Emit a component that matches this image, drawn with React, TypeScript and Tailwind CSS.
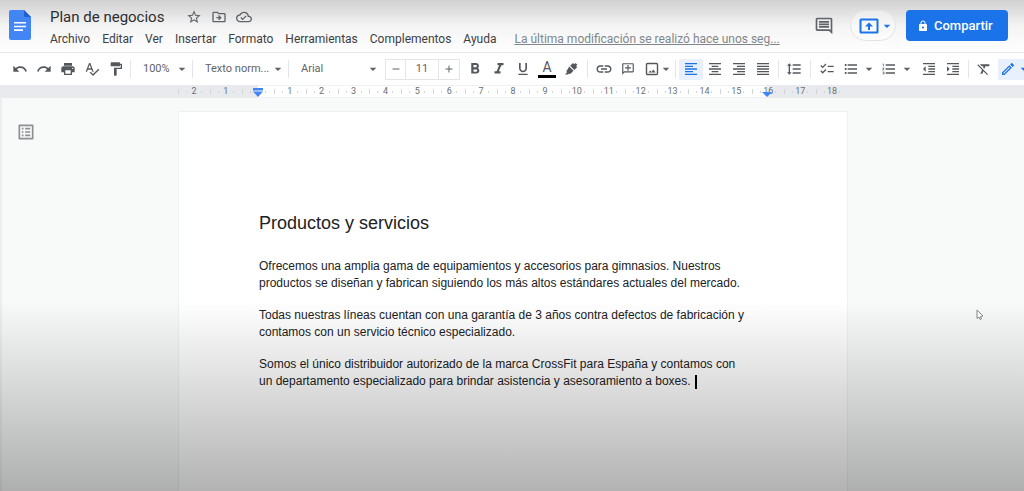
import type { ReactNode } from 'react';
import clsx from 'clsx';
import {
  MdAdd,
  MdArrowDropDown,
  MdChecklist,
  MdFormatAlignCenter,
  MdFormatAlignJustify,
  MdFormatAlignLeft,
  MdFormatAlignRight,
  MdFormatBold,
  MdFormatClear,
  MdFormatIndentDecrease,
  MdFormatIndentIncrease,
  MdFormatItalic,
  MdFormatLineSpacing,
  MdFormatListBulleted,
  MdFormatListNumbered,
  MdFormatPaint,
  MdFormatUnderlined,
  MdLink,
  MdLock,
  MdOutlineAddComment,
  MdOutlineCloudDone,
  MdOutlineDriveFileMove,
  MdOutlineEdit,
  MdOutlineInsertComment,
  MdOutlineListAlt,
  MdPrint,
  MdRedo,
  MdRemove,
  MdSpellcheck,
  MdStarBorder,
  MdUndo,
} from 'react-icons/md';

const menus = ['Archivo', 'Editar', 'Ver', 'Insertar', 'Formato', 'Herramientas', 'Complementos', 'Ayuda'];

const rulerMarks = [2, 1, 0, 1, 2, 3, 4, 5, 6, 7, 8, 9, 10, 11, 12, 13, 14, 15, 16, 17, 18];

const paragraphs = [
  [
    'Ofrecemos una amplia gama de equipamientos y accesorios para gimnasios. Nuestros',
    'productos se diseñan y fabrican siguiendo los más altos estándares actuales del mercado.',
  ],
  [
    'Todas nuestras líneas cuentan con una garantía de 3 años contra defectos de fabricación y',
    'contamos con un servicio técnico especializado.',
  ],
  [
    'Somos el único distribuidor autorizado de la marca CrossFit para España y contamos con',
    'un departamento especializado para brindar asistencia y asesoramiento a boxes.',
  ],
];

function DocsLogo() {
  return (
    <svg viewBox="0 0 22 30" className="h-[30px] w-[22px] shrink-0">
      <path d="M2 0h13l7 7v21a2 2 0 0 1-2 2H2a2 2 0 0 1-2-2V2a2 2 0 0 1 2-2z" fill="#4285f4" />
      <path d="M15 0l7 7h-5.500a1.500 1.500 0 0 1-1.500-1.500z" fill="#1f5fd0" />
      <path d="M5 12h12v1.600H5zM5 15.700h12v1.600H5zM5 19.300h9v1.600H5z" fill="#fff" />
    </svg>
  );
}

function PresentIcon() {
  return (
    <svg viewBox="0 0 20 16" className="h-4 w-5 shrink-0" fill="none" stroke="#1a73e8" strokeWidth="2">
      <rect x="1.500" y="1.500" width="17" height="13" rx="0.500" />
      <path d="M10 12V6" />
      <path d="M6 8.600L10 4.400l4 4.200z" fill="#1a73e8" stroke="none" />
    </svg>
  );
}

function HighlighterIcon() {
  return (
    <svg viewBox="0 0 16 16" className="size-4" fill="currentColor">
      <path d="M6.300 5.600l4.200 4.200-2.700 2.700c-.5.500-1.300.5-1.800.1l-.9.900H2l2-2.200c-.6-.6-.6-1.500 0-2z" />
      <path d="M7.200 4.800L10 2l1.300 1.200 1.200-1.200 1.900 1.800-1.300 1.300L14.200 6.300l-2.900 2.800z" />
    </svg>
  );
}

function ImageIcon() {
  return (
    <svg viewBox="0 0 14 14" className="size-3.5" fill="none" stroke="currentColor" strokeWidth="1.400">
      <rect x="1.500" y="1.500" width="11" height="11" rx="1" />
      <path d="M3.500 10.600l1.700-2.100 1.300 1.500 1.800-2.500 2.300 3.100z" fill="currentColor" stroke="none" />
    </svg>
  );
}

function ToolButton({ label, active, children }: { label: string; active?: boolean; children: ReactNode }) {
  return (
    <button
      aria-label={label}
      title={label}
      className={clsx(
        'flex h-[21px] w-6 shrink-0 items-center justify-center rounded-xs text-base',
        active ? 'bg-[#e8f0fe] text-[#1a73e8]' : 'text-[#54585d]'
      )}
    >
      {children}
    </button>
  );
}

function DropButton({ label, className }: { label: string; className?: string }) {
  return (
    <button
      aria-label={label}
      title={label}
      className={clsx('flex h-5 w-3 shrink-0 items-center justify-center text-[#5f6368]', className)}
    >
      <MdArrowDropDown className="size-4 shrink-0" />
    </button>
  );
}

function Divider({ className = 'mx-[3px]' }: { className?: string }) {
  return <div className={clsx('h-[18px] w-px shrink-0 bg-[#e3e5e8]', className)} />;
}

function ToolSelect({ label, value, className }: { label: string; value: string; className: string }) {
  return (
    <div className={clsx('relative flex shrink-0 items-center', className)}>
      <select
        aria-label={label}
        defaultValue={value}
        className="h-5 w-full appearance-none bg-transparent pl-2.5 text-[11px] text-[#5f6368] outline-none"
      >
        <option>{value}</option>
      </select>
      <MdArrowDropDown className="pointer-events-none absolute right-0 size-4 text-[#5f6368]" />
    </div>
  );
}

function Header() {
  return (
    <header className="flex h-[53px] items-start border-b border-[#e4e6e8] bg-linear-to-b from-[#d0d0d0] via-[#f4f4f4] via-50% to-white pl-[9px] pt-2.5 pr-4">
      <DocsLogo />
      <div className="ml-[19px] min-w-0 flex-1 -mt-1">
        <div className="flex h-[22px] items-center">
          <h1 className="text-[15px] text-[#2c2e31]">Plan de negocios</h1>
          <div className="ml-[22px] flex items-center gap-[9px] text-[#5f6368]">
            <button aria-label="Destacar"><MdStarBorder className="size-4" /></button>
            <button aria-label="Mover"><MdOutlineDriveFileMove className="size-4" /></button>
            <button aria-label="Guardado en Drive"><MdOutlineCloudDone className="size-4" /></button>
          </div>
        </div>
        <nav className="flex h-[22px] items-center gap-3 whitespace-nowrap text-[12px] text-[#3c4043]">
          {menus.map((menu) => (
            <button key={menu}>{menu}</button>
          ))}
          <a href="#historial" className="ml-1.5 text-[#80868b] underline">
            La última modificación se realizó hace unos seg...
          </a>
        </nav>
      </div>
      <div className="flex h-[31px] shrink-0 items-center">
        <button aria-label="Comentarios" className="mr-4 text-[#5f6368]">
          <MdOutlineInsertComment className="size-5" />
        </button>
        <button
          aria-label="Presentar"
          className="mr-2.5 flex h-[31px] w-[46px] items-center rounded-full border border-[#e2e4e7] bg-white/40 pl-2 text-[#1a73e8]"
        >
          <PresentIcon />
          <MdArrowDropDown className="size-4 shrink-0" />
        </button>
        <button className="flex h-[31px] w-[102px] items-center gap-[5px] rounded-sm bg-[#1a73e8] pl-[11px] text-[13px] font-medium text-white">
          <MdLock className="size-3" />
          Compartir
        </button>
      </div>
    </header>
  );
}

function Toolbar() {
  return (
    <div role="toolbar" className="flex h-8 items-center overflow-hidden bg-white pl-2">
      <ToolButton label="Deshacer"><MdUndo /></ToolButton>
      <ToolButton label="Rehacer"><MdRedo /></ToolButton>
      <ToolButton label="Imprimir"><MdPrint /></ToolButton>
      <ToolButton label="Ortografía"><MdSpellcheck /></ToolButton>
      <ToolButton label="Copiar formato"><MdFormatPaint /></ToolButton>
      <Divider className="mx-0.5" />
      <ToolSelect label="Zoom" value="100%" className="w-[57px]" />
      <Divider className="mx-0.5" />
      <ToolSelect label="Estilos" value="Texto norm..." className="w-[91px]" />
      <Divider className="mx-0.5" />
      <ToolSelect label="Fuente" value="Arial" className="w-[90px]" />
      <div className="ml-1 flex h-[21px] w-[75px] shrink-0 divide-x divide-[#e3e5e8] border border-[#e3e5e8] text-[#5f6368]">
        <button aria-label="Reducir tamaño" className="flex w-5 items-center justify-center">
          <MdRemove className="size-3" />
        </button>
        <input
          aria-label="Tamaño de fuente"
          defaultValue="11"
          className="w-0 min-w-0 flex-1 bg-transparent text-center text-[11px] outline-none"
        />
        <button aria-label="Aumentar tamaño" className="flex w-5 items-center justify-center">
          <MdAdd className="size-3" />
        </button>
      </div>
      <div className="ml-[3px] flex">
        <ToolButton label="Negrita"><MdFormatBold className="size-[18px]" /></ToolButton>
        <ToolButton label="Cursiva"><MdFormatItalic className="size-[18px]" /></ToolButton>
        <ToolButton label="Subrayado"><MdFormatUnderlined /></ToolButton>
        <button aria-label="Color de texto" className="flex h-[21px] w-6 flex-col items-center text-[#54585d]">
          <span className="text-sm leading-4">A</span>
          <span className="h-[3px] w-[18px] bg-black" />
        </button>
        <ToolButton label="Color de resaltado"><HighlighterIcon /></ToolButton>
      </div>
      <Divider className="mx-1" />
      <ToolButton label="Insertar enlace"><MdLink className="size-[18px]" /></ToolButton>
      <ToolButton label="Añadir comentario"><MdOutlineAddComment className="size-3.5 -scale-x-100" /></ToolButton>
      <ToolButton label="Insertar imagen"><ImageIcon /></ToolButton>
      <DropButton label="Opciones de imagen" className="-ml-1" />
      <Divider />
      <ToolButton label="Alinear a la izquierda" active><MdFormatAlignLeft /></ToolButton>
      <ToolButton label="Centrar"><MdFormatAlignCenter /></ToolButton>
      <ToolButton label="Alinear a la derecha"><MdFormatAlignRight /></ToolButton>
      <ToolButton label="Justificar"><MdFormatAlignJustify /></ToolButton>
      <Divider />
      <ToolButton label="Interlineado"><MdFormatLineSpacing /></ToolButton>
      <Divider className="mx-1" />
      <ToolButton label="Lista de comprobación"><MdChecklist /></ToolButton>
      <ToolButton label="Lista con viñetas"><MdFormatListBulleted /></ToolButton>
      <DropButton label="Opciones de viñetas" className="mr-0.5" />
      <ToolButton label="Lista numerada"><MdFormatListNumbered /></ToolButton>
      <DropButton label="Opciones de numeración" className="mr-1" />
      <ToolButton label="Reducir sangría"><MdFormatIndentDecrease /></ToolButton>
      <ToolButton label="Aumentar sangría"><MdFormatIndentIncrease /></ToolButton>
      <Divider />
      <ToolButton label="Borrar formato"><MdFormatClear /></ToolButton>
      <button aria-label="Modo de edición" className="ml-0.5 flex h-[21px] w-10 shrink-0 items-center bg-[#e8f0fe] pl-0.5 text-[#1a73e8]">
        <MdOutlineEdit className="size-4 shrink-0" />
        <MdArrowDropDown className="size-4 shrink-0" />
      </button>
    </div>
  );
}

function Ruler() {
  return (
    <div className="flex h-[13px] justify-center bg-[#e8eaed] pl-0.5">
      <div className="relative grid w-[670px] grid-cols-[repeat(21,1fr)]">
        {/* writable area with its two indent handles */}
        <div className="absolute inset-y-0 left-20 right-[81px] border-y border-[#eef0f2] bg-white">
          <svg viewBox="0 0 12 10" className="absolute -left-1.5 top-0.5 h-2.5 w-3" fill="#4285f4">
            <path d="M1 0h10v2.500H1zM1 3.500h10L6 9z" />
          </svg>
          <svg viewBox="0 0 12 10" className="absolute -right-1.5 top-0.5 z-10 h-2.5 w-3" fill="#4285f4">
            <path d="M1 4h10L6 9z" />
          </svg>
        </div>
        {rulerMarks.map((mark, i) => (
          <div key={i} className="relative flex items-center text-[9px] leading-none text-[#6b6f73]">
            <span className="h-[5px] w-px bg-[#d3d6d9]" />
            <span className="ml-[7px] h-0.5 w-px bg-[#d3d6d9]" />
            <span className="w-3.5 text-center">{mark > 0 ? mark : ''}</span>
            <span className="h-0.5 w-px bg-[#d3d6d9]" />
          </div>
        ))}
      </div>
    </div>
  );
}

export default function App() {
  return (
    <div className="relative flex min-h-screen flex-col overflow-hidden bg-[#f8faf9] font-[Roboto,sans-serif]">
      <Header />
      <Toolbar />
      <Ruler />
      <main className="relative flex flex-1 justify-center border-l-2 border-[#eceef0] pt-[13px]">
        <button aria-label="Mostrar esquema" className="absolute left-3.5 top-6 text-[#8b8f92]">
          <MdOutlineListAlt className="size-5" />
        </button>
        <article className="w-[670px] border-x border-t border-[#eff1f1] bg-white px-20 pt-[100px] pb-12 font-['Liberation_Sans',Arial,sans-serif] text-[#202124]">
          <h2 className="text-lg leading-[22px]">Productos y servicios</h2>
          <div className="mt-6 space-y-[15px] text-[12px] leading-[17px]">
            {paragraphs.map(([first, second], i) => (
              <p key={i}>
                {first}
                <br />
                {second}
                {i === paragraphs.length - 1 && (
                  <span className="ml-1 inline-block h-3.5 w-0.5 bg-black align-middle" />
                )}
              </p>
            ))}
          </div>
        </article>
        <svg viewBox="0 0 8 12" className="absolute left-[974px] top-[211px] h-3 w-2" fill="#fff" stroke="#85888a">
          <path d="M1 1v8.500l2-1.500 1.200 2.500 1.300-.6L4.500 7.500 7 7z" />
        </svg>
      </main>
      {/* shade over the lower part of the window */}
      <div className="pointer-events-none absolute inset-x-0 bottom-0 h-[190px] bg-linear-to-b from-transparent to-black/30" />
    </div>
  );
}
